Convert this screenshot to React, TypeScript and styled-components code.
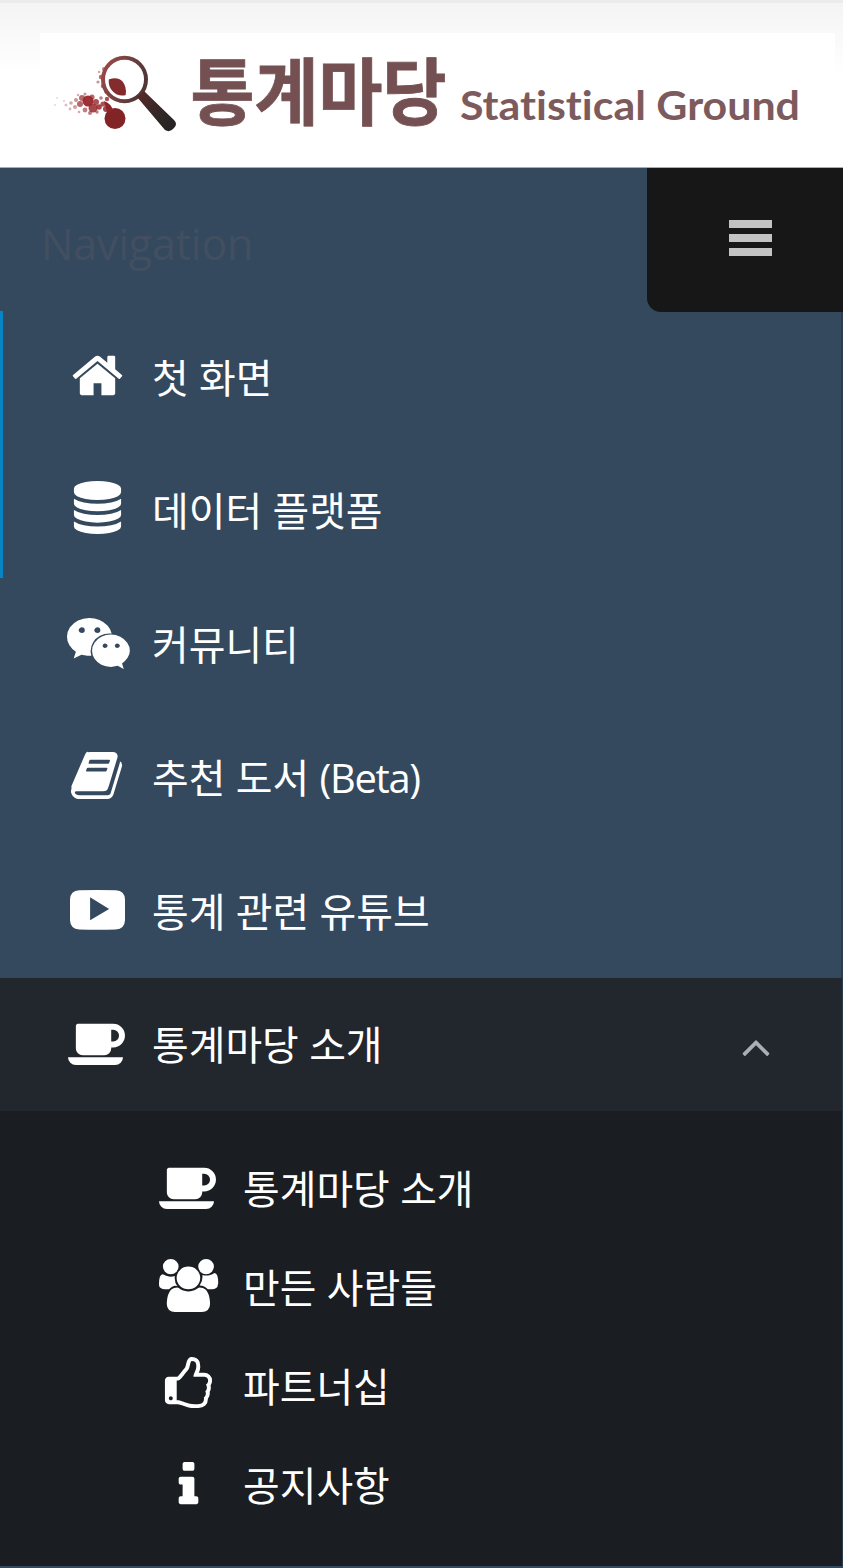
import React from "react";
import styled, { createGlobalStyle } from "styled-components";

const GlobalStyle = createGlobalStyle`
  * { box-sizing: border-box; }
  body { margin: 0; background: #34495e; }
`;

const FONT = `"Open Sans", "Noto Sans CJK KR", sans-serif`;

const Page = styled.div`
  display: flex;
  flex-direction: column;
  width: 843px;
  height: 1568px;
  overflow: hidden;
  background: #34495e;
  font-family: ${FONT};
`;

const Header = styled.header`
  flex: none;
  height: 168px;
  padding: 30px 8px 0 40px;
  border-top: 3px solid #ebebeb;
  border-bottom: 1px solid #a9adab;
  background: linear-gradient(#f4f4f4, #ffffff 72px);
`;

const Logo = styled.svg`
  display: block;
  width: 795px;
  height: 130px;
  background: #fff;
`;

const Sidebar = styled.div`
  flex: none;
  display: flex;
  flex-direction: column;
  height: 1398px;
  border-right: 2px solid #2c3c4e;
`;

const NavTop = styled.div`
  flex: none;
  display: flex;
  justify-content: space-between;
  height: 143px;
  margin-right: -2px;
`;

const NavTitle = styled.span`
  padding: 45px 0 0 41px;
  font-size: 43px;
  line-height: 62px;
  font-weight: 400;
  letter-spacing: -0.2px;
  color: #424f61;
`;

const MenuButton = styled.button`
  display: flex;
  flex-direction: column;
  align-items: center;
  gap: 6px;
  width: 196px;
  height: 143.5px;
  margin: 0;
  padding: 52px 0 0 11px;
  border: 0;
  border-radius: 0 0 0 14px;
  background: #171717;
`;

const MenuBar = styled.span`
  width: 43px;
  height: 8px;
  background: #c3c3c3;
`;

const Item = styled.a<{ $marked?: boolean; $open?: boolean }>`
  flex: none;
  display: flex;
  align-items: center;
  height: 133.4px;
  padding: 0 61px 0 62px;
  background: ${(p) => (p.$open ? "#22262d" : "transparent")};
  box-shadow: ${(p) => (p.$marked ? "inset 3px 0 0 #0685c6" : "none")};
  margin-right: ${(p) => (p.$open ? "-1px" : "0")};
`;

const IconSlot = styled.span<{ $drop: number; $shift: number }>`
  flex: none;
  display: flex;
  justify-content: center;
  width: 71px;
  margin-right: 19px;
  padding-left: ${(p) => p.$shift * 2}px;
  padding-bottom: ${(p) => 7 - p.$drop * 2}px;
`;

const Glyph = styled.svg<{ $w: number; $h: number }>`
  display: block;
  flex: none;
  width: ${(p) => p.$w}px;
  height: ${(p) => p.$h}px;
  fill: #fff;
`;

const Label = styled.span`
  flex: 1;
  padding-top: 0.8px;
  font-size: 39.9px;
  line-height: 56px;
  color: #fff;
  white-space: nowrap;
`;

const Latin = styled.span`
  letter-spacing: -1.3px;
`;

const Chevron = styled.svg`
  display: block;
  width: 48px;
  height: 48px;
  margin: 2px 1.5px 0 0;
  fill: #a9afb3;
`;

const SubMenu = styled.div`
  flex: 1;
  display: flex;
  flex-direction: column;
  padding: 28px 0 0 91px;
  margin-right: -1px;
  background: #1a1d21;
`;

const SubItem = styled(Item)`
  height: 98.8px;
`;

type IconShape = { w: number; h?: number; drop?: number; shift?: number; d: string };

const ICONS: Record<string, IconShape> = {
  home: {
    w: 1792,
    drop: 1.4,
    d: "M1472 992v480q0 26-19 45t-45 19h-384v-384h-256v384h-384q-26 0-45-19t-19-45v-480q0-1 .5-3t.5-3l575-474 575 474q1 2 1 6zm223-69l-62 74q-8 9-21 11h-3q-13 0-21-7l-692-577-692 577q-12 8-24 7-13-2-21-11l-62-74q-8-10-7-23.5t11-21.5l719-599q32-26 76-26t76 26l244 204v-195q0-14 9-23t23-9h192q14 0 23 9t9 23v408l219 182q10 8 11 21.5t-7 23.5z",
  },
  database: {
    w: 1792,
    h: 53,
    shift: -0.7,
    d: "M896 768q237 0 443-43t325-127v170q0 69-103 128t-280 93.5-385 34.5-385-34.5-280-93.5-103-128v-170q119 84 325 127t443 43zm0 768q237 0 443-43t325-127v170q0 69-103 128t-280 93.5-385 34.5-385-34.5-280-93.5-103-128v-170q119 84 325 127t443 43zm0-384q237 0 443-43t325-127v170q0 69-103 128t-280 93.5-385 34.5-385-34.5-280-93.5-103-128v-170q119 84 325 127t443 43zm0-1152q208 0 385 34.5t280 93.5 103 128v128q0 69-103 128t-280 93.5-385 34.5-385-34.5-280-93.5-103-128v-128q0-69 103-128t280-93.5 385-34.5z",
  },
  chat: {
    w: 2048,
    drop: 2.5,
    shift: 1,
    d: "M580 461q0-41-25-66t-66-25q-43 0-76 25.5t-33 65.5q0 39 33 64.5t76 25.5q41 0 66-24.5t25-65.5zm743 507q0-28-25.5-50t-65.5-22q-27 0-49.5 22.5t-22.5 49.5q0 28 22.5 50.5t49.5 22.5q40 0 65.5-22t25.5-51zm-236-507q0-41-24.5-66t-65.5-25q-43 0-76 25.5t-33 65.5q0 39 33 64.5t76 25.5q41 0 65.5-24.5t24.5-65.5zm635 507q0-28-26-50t-65-22q-27 0-49.5 22.5t-22.5 49.5q0 28 22.5 50.5t49.5 22.5q39 0 65-22t26-51zm-266-397q-31-4-70-4-169 0-311 77t-223.5 208.5-81.5 287.5q0 78 23 152-35 3-68 3-26 0-50-1.5t-55-6.5-44.5-7-54.5-10.5-50-10.5l-253 127 72-218q-290-203-290-490 0-169 97.5-311t264-223.5 363.5-81.5q176 0 332.5 66t262 182.5 136.5 260.5zm592 561q0 117-68.5 223.5t-185.5 193.5l55 181-199-109q-150 37-218 37-169 0-311-70.5t-223.5-191.5-81.5-264 81.5-264 223.5-191.5 311-70.5q161 0 303 70.5t227.5 192 85.5 263.5z",
  },
  book: {
    w: 1792,
    drop: 1,
    shift: 1,
    d: "M1639 478q40 57 18 129l-275 906q-19 64-76.5 107.5t-122.5 43.5h-923q-77 0-148.5-53.5t-99.5-131.5q-24-67-2-127 0-4 3-27t4-37q1-8-3-21.5t-3-19.5q2-11 8-21l440-1017q12-30 26-48t36-31 47.5 5.5l-1 3q38-9 51-9h761q74 0 114 56t18 130l-274 906q-36 119-71.5 153.5t-128.5 34.5h-869q-27 0-38 15-11 16-1 43 24 70 144 70h923q29 0 56-15.5t35-41.5l300-987q7-22 5-57 38 15 59 43zm-1064 2q-4 13 2 22.5t20 9.5h608q13 0 25.5-9.5t16.5-22.5l21-64q4-13-2-22.5t-20-9.5h-608q-13 0-25.5 9.5t-16.5 22.5zm-83 256q-4 13 2 22.5t20 9.5h608q13 0 25.5-9.5t16.5-22.5l21-64q4-13-2-22.5t-20-9.5h-608q-13 0-25.5 9.5t-16.5 22.5z",
  },
  video: {
    w: 1792,
    drop: 3,
    d: "M655 1210l620-365-620-378zM300 236q596-20 1192 0 290 20 300 300v680q-10 280-300 300-596 20-1192 0-290-20-300-300v-680q10-280 300-300z",
  },
  coffee: {
    w: 1920,
    drop: 0.5,
    d: "M1664 704q0-80-56-136t-136-56h-64v384h64q80 0 136-56t56-136zm-1664 704h1792q0 106-75 181t-181 75h-1280q-106 0-181-75t-75-181zm1856-704q0 159-112.5 271.5t-271.5 112.5h-64v32q0 92-66 158t-158 66h-704q-92 0-158-66t-66-158v-736q0-26 19-45t45-19h1152q159 0 271.5 112.5t112.5 271.5z",
  },
  people: {
    w: 2048,
    h: 53,
    drop: 1,
    d: "M657 896q-162 5-265 128h-134q-82 0-138-40.5t-56-118.5q0-353 124-353 6 0 43.5 21t97.5 42.5 119 21.5q67 0 133-23-5 37-5 66 0 159 93 293zm1071 637q0 120-73 189.5t-194 69.5h-874q-121 0-194-69.5t-73-189.5q0-53 3.5-103.5t14-109 26.5-108.5 43-97.5 62-81 85.5-53.5 111.5-20q10 0 43 21.5t73 48 107 48 135 21.5 135-21.5 107-48 73-48 43-21.5q61 0 111.5 20t85.5 53.5 62 81 43 97.5 26.5 108.5 14 109 3.5 103.5zm-1024-1277q0 106-75 181t-181 75-181-75-75-181 75-181 181-75 181 75 75 181zm704 384q0 159-112.5 271.5t-271.5 112.5-271.5-112.5-112.5-271.5 112.5-271.5 271.5-112.5 271.5 112.5 112.5 271.5zm576 225q0 78-56 118.5t-138 40.5h-134q-103-123-265-128 93-134 93-293 0-29-5-66 66 23 133 23 59 0 119-21.5t97.5-42.5 43.5-21q124 0 124 353zm-128-609q0 106-75 181t-181 75-181-75-75-181 75-181 181-75 181 75 75 181z",
  },
  thumb: {
    w: 1792,
    drop: 2,
    d: "M384 1344q0-26-19-45t-45-19-45 19-19 45 19 45 45 19 45-19 19-45zm1152-576q0-51-39-89.5t-89-38.5h-352q0-58 48-159.5t48-160.5q0-98-32-145t-128-47q-26 26-38 85t-30.5 125.5-59.5 109.5q-22 23-77 91-4 5-23 30t-31.5 41-34.5 42.5-40 44-38.5 35.5-40 27-35.5 9h-32v640h32q13 0 31.5 3t33 6.5 38 11 35 11.5 35.5 12.5 29 10.5q211 73 342 73h121q192 0 192-167 0-26-5-56 30-16 47.5-52.5t17.5-73.5-18-69q53-50 53-119 0-25-10-55.5t-25-47.5q32-1 53.5-47t21.5-81zm128-1q0 89-49 163 9 33 9 69 0 77-38 144 3 21 3 43 0 101-60 178 1 139-85 219.5t-227 80.5h-129q-96 0-189.5-22.5t-216.5-65.5q-116-40-138-40h-288q-53 0-90.5-37.5t-37.5-90.5v-640q0-53 37.5-90.5t90.5-37.5h274q36-24 137-155 58-75 107-128 24-25 35.5-85.5t30.5-126.5 62-108q39-37 90-37 84 0 151 32.5t102 101.5 35 186q0 93-48 192h176q104 0 180 76t76 179z",
  },
  info: {
    w: 1792,
    drop: 3.2,
    shift: -0.5,
    d: "M1216 1344v128q0 26-19 45t-45 19h-512q-26 0-45-19t-19-45v-128q0-26 19-45t45-19h64v-384h-64q-26 0-45-19t-19-45v-128q0-26 19-45t45-19h384q26 0 45 19t19 45v576h64q26 0 45 19t19 45zm-128-1120v160q0 26-19 45t-45 19h-256q-26 0-45-19t-19-45v-160q0-26 19-45t45-19h256q26 0 45 19t19 45z",
  },
};

const Icon = ({ name }: { name: string }) => {
  const { w, h = 55, drop = 0, shift = 0, d } = ICONS[name];
  return (
    <IconSlot $drop={drop} $shift={shift}>
      <Glyph
        $w={(w / 1792) * 55}
        $h={h}
        viewBox={`0 0 ${w} 1792`}
        preserveAspectRatio="none"
      >
        <path d={d} fillRule={name === "video" ? "evenodd" : "nonzero"} />
      </Glyph>
    </IconSlot>
  );
};

const MENU: { icon: string; text: string; latin?: string; marked?: boolean }[] = [
  { icon: "home", text: "첫 화면", marked: true },
  { icon: "database", text: "데이터 플랫폼", marked: true },
  { icon: "chat", text: "커뮤니티" },
  { icon: "book", text: "추천 도서 ", latin: "(Beta)" },
  { icon: "video", text: "통계 관련 유튜브" },
];

const SUBMENU: { icon: string; text: string }[] = [
  { icon: "coffee", text: "통계마당 소개" },
  { icon: "people", text: "만든 사람들" },
  { icon: "thumb", text: "파트너십" },
  { icon: "info", text: "공지사항" },
];

// Ink droplets that scatter to the left of the lens: [x, y, radius, opacity]
const DROPS: [number, number, number, number][] = [
  [88, 101, 5.5, 0.95], [93, 108, 4.5, 0.85], [82, 98, 3, 0.7], [80, 104, 3, 0.7],
  [85, 110, 2.4, 0.6], [76, 100, 2, 0.5], [75, 107, 2, 0.45], [71, 103, 1.8, 0.4],
  [70, 109, 1.4, 0.35], [66, 105, 1.5, 0.3], [64, 101, 1, 0.25], [57, 98, 0.9, 0.2],
  [55, 105, 1, 0.2], [79, 112, 1.3, 0.4], [92, 97, 2.6, 0.7], [96, 102, 3, 0.8],
  [99, 107, 2.8, 0.85], [103, 104, 2.6, 0.8], [101, 98, 1.8, 0.6], [106, 109, 3, 0.85],
  [90, 113, 2, 0.6], [85, 94, 1.5, 0.5], [78, 95, 1.2, 0.4], [97, 112, 1.7, 0.6],
  [98, 82, 1.6, 0.5], [101, 77, 2.2, 0.7], [103, 86, 2.2, 0.7], [99, 72, 1.3, 0.4],
  [106, 92, 1.8, 0.6], [104, 69, 2, 0.6], [107, 99, 2.2, 0.8],
];

const LogoArt = () => (
  <Logo viewBox="40 33 795 130">
    <defs>
      <linearGradient id="rim" x1="0" y1="0" x2="1" y2="0.4">
        <stop offset="0" stopColor="#a04a4a" />
        <stop offset="1" stopColor="#503838" />
      </linearGradient>
      <linearGradient id="grip" x1="0" y1="0" x2="1" y2="1">
        <stop offset="0" stopColor="#5c2a2a" />
        <stop offset="0.6" stopColor="#302727" />
        <stop offset="1" stopColor="#222" />
      </linearGradient>
    </defs>
    {DROPS.map(([x, y, r, o]) => (
      <circle key={`${x}-${y}`} cx={x} cy={y} r={r} fill="#97272b" opacity={o} />
    ))}
    <circle cx="115" cy="118.5" r="10.5" fill="#822326" />
    <path d="M104 101q8 3 9 10l-6 1z" fill="#8a2629" />
    <ellipse cx="124.5" cy="79.5" rx="21.5" ry="21.8" fill="#fff" stroke="url(#rim)" strokeWidth="4" />
    <path d="M109.500 80q8-2.500 12.500 2 4 5 3 12.500-7 1.500-12-4-4-4.500-3.500-10.500z" fill="#842b2d" stroke="#842b2d" strokeWidth="1.500" strokeLinejoin="round" />
    <path d="M137 97l7-6 30 29q4 4 0 8-4 5-9 2z" fill="url(#grip)" />
    <text
      x="190.5"
      y="119"
      fontFamily={`"Noto Sans CJK KR", sans-serif`}
      fontSize="73"
      fontWeight="700"
      fill="#745052"
      stroke="#745052"
      strokeWidth="0.8"
      textLength="256"
      lengthAdjust="spacingAndGlyphs"
    >
      통계마당
    </text>
    <text
      x="460"
      y="119.5"
      fontFamily="Lato, sans-serif"
      fontSize="41"
      fontWeight="700"
      fill="#7d5b5c"
      textLength="340"
      lengthAdjust="spacingAndGlyphs"
      style={{ fontVariantLigatures: "none" }}
    >
      Statistical Ground
    </text>
  </Logo>
);

export default function App() {
  return (
    <Page>
      <GlobalStyle />
      <Header>
        <LogoArt />
      </Header>
      <Sidebar>
        <NavTop>
          <NavTitle>Navigation</NavTitle>
          <MenuButton aria-label="Menu">
            <MenuBar />
            <MenuBar />
            <MenuBar />
          </MenuButton>
        </NavTop>
        {MENU.map((m) => (
          <Item key={m.text} $marked={m.marked}>
            <Icon name={m.icon} />
            <Label>
              {m.text}
              {m.latin && <Latin>{m.latin}</Latin>}
            </Label>
          </Item>
        ))}
        <Item $open>
          <Icon name="coffee" />
          <Label>통계마당 소개</Label>
          <Chevron viewBox="0 0 1792 1792">
            <path d="M1395 1184q0 13-10 23l-50 50q-10 10-23 10t-23-10l-393-393-393 393q-10 10-23 10t-23-10l-50-50q-10-10-10-23t10-23l466-466q10-10 23-10t23 10l466 466q10 10 10 23z" />
          </Chevron>
        </Item>
        <SubMenu>
          {SUBMENU.map((m) => (
            <SubItem key={m.text}>
              <Icon name={m.icon} />
              <Label>{m.text}</Label>
            </SubItem>
          ))}
        </SubMenu>
      </Sidebar>
    </Page>
  );
}
